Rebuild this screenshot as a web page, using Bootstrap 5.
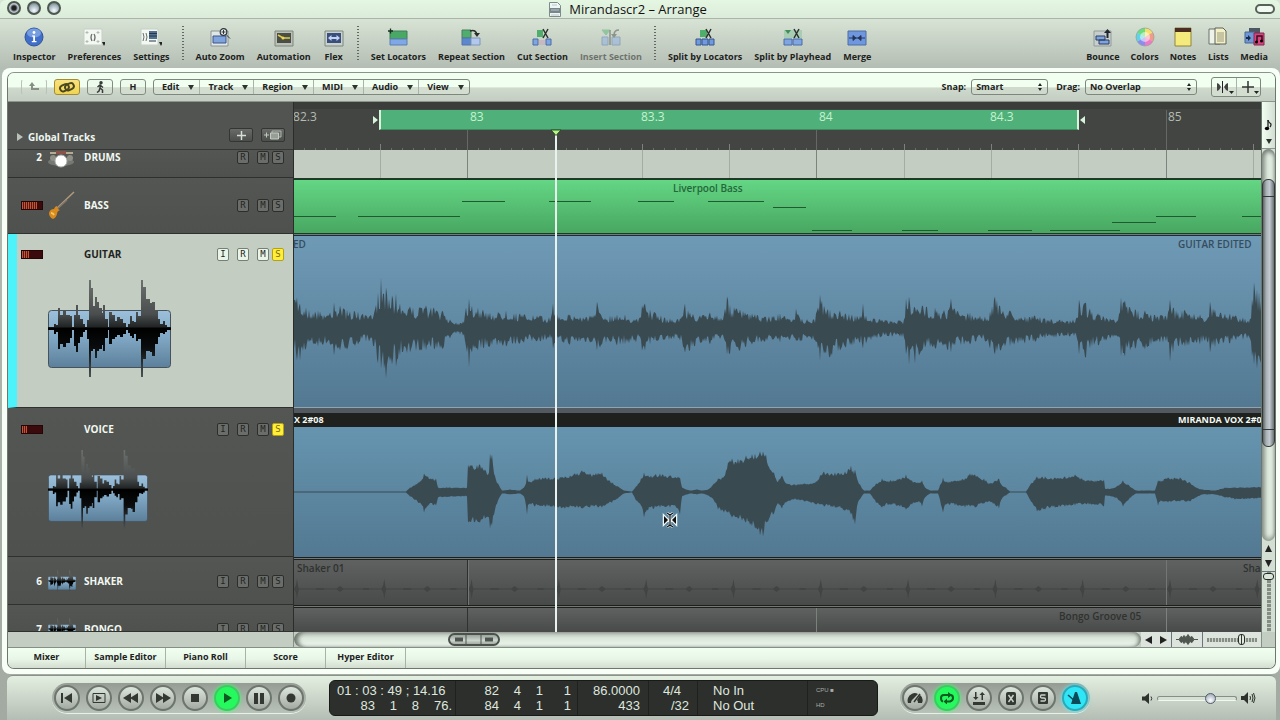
<!DOCTYPE html>
<html lang="en">
<head>
<meta charset="utf-8">
<meta name="viewport" content="width=device-width, initial-scale=1">
<title>Mirandascr2 – Arrange</title>
<link href="https://cdn.jsdelivr.net/npm/bootstrap@5.3.0/dist/css/bootstrap.min.css" rel="stylesheet">
<style>
:root{--ui:"Open Sans","Noto Sans",sans-serif;--head:286px}
body{font-family:var(--ui);font-size:9px;line-height:12px;font-weight:700;color:#1d221d;background:#a4aba3}
button,input,select{font:inherit;color:inherit}
button{background:none;border:0;padding:0}
svg{display:block}
.app{height:100vh;min-height:560px;background:linear-gradient(#d8e4d6 18px,#b4bdb3 68px,#a2aaa1 100%)}
.titlebar{height:19px;padding-right:24px;background:linear-gradient(#e4f7e2,#dcebda);border-bottom:1px solid #aab4a9;border-radius:6px 6px 0 0;font-size:13px;line-height:18px;font-weight:400;color:#111}
.lights{left:7px;top:1px;gap:6px}
.lights i{width:14px;height:14px;border-radius:50%;border:2px solid #4e5650;background:radial-gradient(circle at 50% 75%,#f4fbff,#9fb0b8 60%,#5b666c)}
.lights i:first-child{background:radial-gradient(circle,#222 0 2px,#b9c6cc 4px)}
.lozenge{right:5px;top:4px;width:20px;height:10px;border:2px solid #59605a;border-radius:6px;background:#f0faf0}
.toolbar{height:49px;padding:8px 12px 0 13px;gap:12px}
.tool{display:flex;flex-direction:column;align-items:center;gap:4px;white-space:nowrap}
.tool svg{width:22px;height:20px}
.tool.off{opacity:.5}
.vsep{width:2px;height:35px;margin-top:-1px;background:repeating-linear-gradient(#626962 0 1px,transparent 1px 3px)}
.rightset{gap:11px}
.shell{margin-left:2px;min-height:0;background:#f7fff7;border-radius:8px;padding:4px 4px 5px 5px}
.panel{border:1px solid #6e776e;border-radius:7px;overflow:hidden;background:#e8f8e8;border-top-color:#8b938a;min-height:0}
.menus{height:29px;background:linear-gradient(#f1fff1 0 50%,#cfdacd 53%,#c3cdc2);padding:0 14px 0 13px;border-bottom:1px solid #8c948b}
.leftset{gap:7px}
.pb{height:16px;width:26px;border:1px solid #838c82;border-radius:3px;background:linear-gradient(#edfbed 50%,#d2ddd0 52%);display:flex;align-items:center;justify-content:center}
.pb.hot{background:linear-gradient(#f8e180,#f0d552);border-color:#a48c35}
.pb.dim{border-color:transparent #b9c2b8;background:none}
.mgroup{border:1px solid #7e877d;border-radius:3px;height:16px;background:linear-gradient(#f0fff0 50%,#d3ded1 52%)}
.mgroup button{display:flex;align-items:center;gap:9px;padding:0 5px 0 8px;border-right:1px solid #aab3a9}
.mgroup button:last-child{border-right:0}
.mgroup button::after,.dn{content:"";width:6px;height:0;border:3px solid transparent;border-top:5px solid #2d332d;border-bottom:0}
.pick{position:relative;height:16px;border:1px solid #7e877d;border-radius:3px;background:linear-gradient(#f0fff0 50%,#cfdacd 52%)}
.pick select{appearance:none;background:none;border:0;padding:0 16px 0 4px;height:14px;line-height:14px;width:100%;display:block;outline:0}
.pick svg{position:absolute;right:4px;top:2px}
.picks{gap:5px}.picks label+.pick+label{margin-left:3px}
.snapw{width:77px}.dragw{width:112px}
.tools{height:20px;width:50px;margin-left:14px;border:1px solid #7e877d;border-radius:3px;background:linear-gradient(#f0fff0 50%,#d3ded1 52%)}
.tools button{width:50%}.tools button+button{border-left:1px solid #aab3a9}

.arrange{background:#3a3c39;min-height:0}
.trackcol{min-width:0}
.rulerrow{height:48px;flex:none}
.lefthead{width:var(--head);flex:none;background:#515451;border-right:1px solid #2b2d2a;color:#eef5ee;box-shadow:inset 0 -1px #343634}
.gt{gap:4px;height:10px;font-size:10px}
.hb{width:24px;height:14px;border:1px solid #343634;border-radius:2px;background:linear-gradient(#686b68,#4b4e4b);display:flex;align-items:center;justify-content:center}
.ruler{position:relative;background:#434542;border-top:7px solid #3b3d3a;overflow:hidden;font-size:12px;font-weight:400;line-height:14px;color:#b4bbb3}
.ruler .num,.ruler .numon{position:absolute;top:1px}
.ruler .numon{color:#c6f3cf}
.cycle{position:absolute;top:1px;height:20px;background:#4fb07a;border-left:2px solid #d8f3dc;border-right:2px solid #d8f3dc;border-bottom:1px solid #3d8c5f}
.tk{position:absolute;bottom:0;width:1px;height:2px;background:#6b6e6a}
.tk.b{height:6px;background:#7d807c}.tk.m{height:40px;background:#656864}.tk.m.short{height:20px}
.locL,.locR{position:absolute;top:7px;width:0;height:0;border:4px solid transparent;border-left:5px solid #d8f3dc;border-right:0}
.locR{border:4px solid transparent;border-right:5px solid #d8f3dc;border-left:0}

.track{position:relative;flex:none}
.drums{height:28px}.bass{height:56px}.guitar{height:174px}.voice{height:149px}.shaker{height:48px}.bongo{flex:1 1 0;min-height:0;overflow:hidden}
.th{position:relative;width:var(--head);flex:none;background:linear-gradient(#535652,#4e514e);border-right:1px solid #2b2d2a;border-bottom:1px solid #2f312e;color:#f2f8f2;overflow:hidden}
.line1{display:grid;grid-template-columns:40px 36px 133px 20px 20px 15px 12px;grid-template-rows:14px;align-items:center;height:14px}
.line1 .nm{font-size:10px;line-height:14px}
.line1 .tn{justify-self:end;padding-right:6px;font-size:10px;line-height:14px}
.bass .line1{margin-top:20px}
.guitar .line1{margin-top:13px}
.voice .line1{margin-top:14px}
.shaker .line1,.bongo .line1{margin-top:17px}
.arm{grid-column:5}
.sq{width:12px;height:13px;border:1px solid #2c2e2b;border-radius:2px;background:#6a6d69;color:#232522;font:9px/11px "DejaVu Sans Mono",monospace;text-align:center}
.guitar .sq{background:#eaf5e9;color:#1f231f;border-color:#767f75}
.track .sq.solo{background:#ffee3c;color:#7a6a00;border-color:#b5a213}
.guitar .th{background:#c3cdc1;color:#222;border-left:9px solid #4df3fb}
.guitar .line1{margin-left:-9px}
.led{width:22px;height:9px;margin-left:13px;background:#3b0a0c;border:1px solid #260506}
.led i{display:block;height:100%;background:repeating-linear-gradient(90deg,#c0553a 0 1px,#5c1710 1px 2px)}
.pic{margin-left:-1px}
.bigpic{margin:19px 0 0 31px;width:123px;height:98px}
.midpic{margin:14px 0 0 40px;width:100px;height:80px}
.lane{position:relative;min-width:0;overflow:hidden}
.wave{width:100%;position:absolute;left:0;top:0;height:100%}
.rg{position:relative;overflow:hidden;white-space:nowrap}
.drums .lane{background:#c3cdc1}
.bass .lane{padding:2px 0 1px;background:#1d3a26}
.bass .rg{height:100%;background:linear-gradient(#64d684,#48a761)}
.guitar .lane{border-top:1px solid #6d7a80}
.guitar .rg{height:100%;border-top:1px solid #1e2c34;border-bottom:1px solid #93a3ab;background:linear-gradient(#6f9ab6,#537992)}
.voice .lane{padding-top:5px;background:#525960}
.voice .rg{background:linear-gradient(#6694af,#537992)}
.vt{height:14px;flex:none;background:#1e211e;color:#f4faf4;line-height:13px}
.dimlane{border-top:1px solid #1d1f1d;background:#747874;padding-top:1px}
.dimlane .rg{height:100%;border-top:1px solid #1d1f1d;background:linear-gradient(#5f6260,#474a48)}
.lb{position:absolute;top:2px;font-weight:600;font-size:10px;line-height:12px;color:#364d5e}
.lb.onbass{color:#23683a}.lb.ondim{color:#2f3230}
.nt{position:absolute;height:1px;background:#1f5a30}
.gl{position:absolute;top:0;height:100%;width:1px}
.over{position:absolute;left:var(--head);right:0;top:28px;bottom:0;pointer-events:none}
.ph{position:absolute;top:0;bottom:0;width:2px;margin-left:-1px;background:#e9f2ee}
.ph svg{position:absolute;left:-5px;top:-1px}
.cursor{position:absolute;top:390px;margin:-8px 0 0 -8px}
.side{width:14px;flex:none;background:#d4dfd3;border-left:1px solid #6e776e}
.noteb{height:47px;background:linear-gradient(90deg,#f1fff1,#d3ded2);border-bottom:1px solid #8c948b}
.vtrack{flex:1;background:linear-gradient(90deg,#9fa89e,#dbe6da 45%,#eef9ee);border-radius:7px;box-shadow:inset 0 3px 4px #777f76,inset 0 -3px 4px #9aa399;padding-top:30px}
.vthumb{height:74%;border-radius:6px;border:1px solid #333735;background:linear-gradient(#333735,#333735) 0 16px/100% 1px no-repeat,linear-gradient(#333735,#333735) 0 calc(100% - 16px)/100% 1px no-repeat,linear-gradient(90deg,#5d6464,#a9b1b6 30%,#c3cbd0 60%,#6a7174)}
.sb{height:16px;background:#c3cdc1;border-bottom:1px solid #868f85}
.sbleft{width:var(--head);flex:none;border-right:1px solid #868f85}
.sbend{width:14px;border-left:1px solid #868f85}
.hscroll{background:linear-gradient(#b2bbb1,#dbe6da 40%,#eef8ee);border-radius:9px;box-shadow:inset 5px 0 4px -1px #6f776e,inset -4px 0 4px -2px #6f776e}
.hthumb{position:absolute;top:1px;height:13px;width:52px;border:2px solid #4b514c;border-radius:7px;background:linear-gradient(#9ba39c,#ccd6cd 60%,#a3aba3)}
.tabsrow{height:20px;background:linear-gradient(#f0fff0,#e8f6e7 55%,#d3ddd1)}
.tabsrow a{width:80px;text-align:center;line-height:18px;color:inherit;text-decoration:none;border-right:1px solid #a9b2a8}
.tabsrow a:first-child{width:78px}
.transport{height:45px;margin:1px 4px 0 7px;padding:0 20px 0 45px;border-top:1px solid #8a9289;border-radius:6px 6px 0 0;background:linear-gradient(#e3efe1,#b4bdb3)}
.pill{height:30px;border-radius:15px;background:linear-gradient(#959c94,#b9c2b8);padding:2px;gap:6px;box-shadow:0 1px #e7f1e6}
.rb{width:26px;height:26px;border-radius:50%;border:2px solid #6d756d;background:linear-gradient(#dde6dc,#a2aaa1);display:flex;align-items:center;justify-content:center;color:#333833}
.rb.go{background:#26f95e;border-color:#3fc963;box-shadow:0 0 4px #42ff70;color:#0c5a20}
.rb.cy{background:#2fe6f7;border-color:#2aa9b8;box-shadow:0 0 4px #57eeff;color:#0b4a58}
.lcd{height:36px;margin:0 22px 0 23px;flex:0 1 549px;background:#2d2f2d;border:1px solid #181a18;border-radius:6px;color:#dfe7df;font:13px/15px "Liberation Sans",Arial,sans-serif;overflow:hidden;white-space:nowrap}
.lcd>div{border-right:1px solid #1f211f;padding-top:2px}
.lcd>div:last-child{border:0}
.lr{display:grid;text-align:right}
.c1{width:126px}.c1 .lr{grid-template-columns:45px 22px 22px 33px}
.c1 p{margin:0;padding-left:7px}
.c2{width:122px}.c2 .lr{grid-template-columns:43px 22px 22px 28px}
.c3{width:71px}.c4{width:49px}.c5{width:110px;padding-left:15px}.c6{font-size:6px;color:#a5ada5;padding-left:8px}
input[type=range]{appearance:none;background:none;margin:0;display:block}
.vol{width:80px;height:12px}
.vol::-webkit-slider-runnable-track{height:5px;border:1px solid #868e85;border-radius:3px;background:#d6e0d5;border-bottom-color:#f0f8f0}
.vol::-webkit-slider-thumb{appearance:none;width:11px;height:11px;margin-top:-4px;border-radius:50%;border:1px solid #515c6a;background:radial-gradient(circle at 50% 70%,#fff,#8e9aab)}
.zm{width:50px;height:14px}
.zm::-webkit-slider-runnable-track{height:4px;background:repeating-linear-gradient(90deg,#858d84 0 2px,#c9d3c8 2px 3px)}
.zm::-webkit-slider-thumb{appearance:none;width:7px;height:11px;margin-top:-4px;border-radius:3px;border:1px solid #272b27;background:linear-gradient(90deg,#e0eadf 2px,#333 2px 3px,#e0eadf 3px)}
.vz{writing-mode:vertical-lr;width:13px;height:60px}
.vz::-webkit-slider-runnable-track{width:4px;background:repeating-linear-gradient(#858d84 0 3px,#c9d3c8 3px 4px)}
.vz::-webkit-slider-thumb{appearance:none;width:11px;height:7px;margin-left:-4px;border-radius:3px;border:1px solid #272b27;background:#dbe6da}
</style>
</head>
<body>
<svg width="0" height="0" class="position-absolute" aria-hidden="true">
  <defs>
    <linearGradient id="gb" x1="0" y1="0" x2="0" y2="1"><stop offset="0" stop-color="#9cc0dc"/><stop offset=".5" stop-color="#7ea5c2"/><stop offset="1" stop-color="#5c809b"/></linearGradient>
    <linearGradient id="gk" x1="0" y1="0" x2="0" y2="1"><stop offset="0" stop-color="#6c706e"/><stop offset=".35" stop-color="#4a4e4e"/><stop offset=".48" stop-color="#222525"/><stop offset=".5" stop-color="#000"/><stop offset=".7" stop-color="#0a0c0d"/><stop offset="1" stop-color="#4b5357"/></linearGradient>
    <symbol id="wv" viewBox="0 0 123 98" preserveAspectRatio="none">
      <rect x=".5" y="30.500" width="122" height="57" rx="3" fill="url(#gb)" stroke="#46535b"/>
      <path id="wvpath" fill="url(#gk)" d=""/>
    </symbol>
  </defs>
</svg>
<div class="app d-flex flex-column overflow-hidden">
  <header class="titlebar position-relative d-flex justify-content-center align-items-center gap-2">
    <div class="lights position-absolute d-flex"><i></i><i></i><i></i></div>
    <svg width="12" height="15" viewBox="0 0 12 15"><path d="M.5.500h8l3 3v11H.5z" fill="#eef6f4" stroke="#7e8a8c"/><path d="M1 6h10v5H1z" fill="#78858a"/><path d="M2 8h8M3 3h5M2 13h8" stroke="#b8c6cc"/></svg>
    <span>Mirandascr2 – Arrange</span>
    <div class="lozenge position-absolute"></div>
  </header>

  <div class="toolbar d-flex flex-shrink-0">
    <button class="tool"><svg viewBox="0 0 22 20"><circle cx="11" cy="10" r="9" fill="#3f6fc8" stroke="#31539b"/><ellipse cx="11" cy="6" rx="7" ry="4.500" fill="#9bbcf0" opacity=".6"/><path d="M9 8.500h3V14h1.500v1.200H8.800V14h1.400V9.600H9z" fill="#fff"/><circle cx="11" cy="5.500" r="1.400" fill="#fff"/></svg>Inspector</button>
    <button class="tool"><svg viewBox="0 0 22 20"><path d="M1 2h18v16H1z" fill="#f3f8f2" stroke="#c7cfc6"/><path d="M4 4v3M4 13v3M15 4v3M15 13v3M2.500 5.500h3M2.500 14.500h3M13.500 5.500h3M13.500 14.500h3" stroke="#b3bab3"/><path d="M9 7q-2 3 0 7M11 7q2 3 0 7" fill="none" stroke="#676d68" stroke-width="1.300"/><path d="M19 15h4l-2 4z" fill="#222"/></svg>Preferences</button>
    <button class="tool"><svg viewBox="0 0 22 20"><path d="M1 2h17v16H1z" fill="#f3f8f2" stroke="#c7cfc6"/><path d="M3 6q2 4 0 8M6 6q2 4 0 8" fill="none" stroke="#676d68"/><path d="M9 4h8v8H9z" fill="#53708f"/><path d="M9 6.500h8M9 9h8M9 14h7" stroke="#23364d"/><path d="M19 15h4l-2 4z" fill="#222"/></svg>Settings</button>
    <div class="vsep"></div>
    <button class="tool"><svg viewBox="0 0 22 20"><path d="M2 4h17v15H2z" fill="#dfe7e6" stroke="#8b9492"/><path d="M4 9h13v7H4z" fill="#7fa4dd" stroke="#3b5587"/><circle cx="14.500" cy="5" r="3.300" fill="#e7efef" stroke="#30353a" stroke-width="1.200"/><path d="m17 7.500 4 4M12.500 5h4M14.500 3v4" stroke="#30353a"/></svg>Auto Zoom</button>
    <button class="tool"><svg viewBox="0 0 22 20"><path d="M2 4h18v15H2z" fill="#b9c1b8" stroke="#7e867d"/><path d="M4 6h14v10H4z" fill="#4b4e42"/><path d="M5 8l5 3h7" fill="none" stroke="#dccb55" stroke-width="1.500"/><circle cx="10" cy="11" r="1.500" fill="#ecd94e"/></svg>Automation</button>
    <button class="tool"><svg viewBox="0 0 22 20"><path d="M2 4h18v15H2z" fill="#c9d2cf" stroke="#7e867d"/><path d="M4 6h14v10H4z" fill="#3b4f7c"/><path d="m5 11 3.500-3v2h5V8l3.500 3-3.500 3v-2h-5v2z" fill="#c3d4f5"/></svg>Flex</button>
    <div class="vsep"></div>
    <button class="tool"><svg viewBox="0 0 22 20"><path d="M3 4h17v8H3z" fill="#49a865" stroke="#3f7f54"/><path d="M3 12h17v6H3z" fill="#7fa8e6" stroke="#5f7fb2"/><path d="M1 4h5M3.500 1.500v5" stroke="#16301c" stroke-width="1.300"/></svg>Set Locators</button>
    <button class="tool"><svg viewBox="0 0 22 20"><path d="M2 3h9v8H2z" fill="#4fae6c" stroke="#4b7d5c"/><path d="M2 11h9v7H2z" fill="#5c86ce" stroke="#5574a8"/><path d="M11 11h9v7h-9z" fill="#b2c8ec" stroke="#7f96bc"/><path d="M10 4q6-2 7 4" fill="none" stroke="#25302a" stroke-width="1.500"/><path d="M14 6h6l-3 4z" fill="#25302a"/></svg>Repeat Section</button>
    <button class="tool"><svg viewBox="0 0 22 20"><path d="M6 3h6v7H6z" fill="#4fae6c"/><path d="M2 12h5v6H2zM15 12h5v6h-5z" fill="#7fa5e2" stroke="#4b6da4"/><path d="M8 13h6v5H8z" fill="#c7b9bf"/><path d="m12 2 5 9M17 2l-5 9" stroke="#2b302d" stroke-width="1.500"/></svg>Cut Section</button>
    <button class="tool off" disabled><svg viewBox="0 0 22 20"><path d="M2 3h8l-4 5z" fill="#58b173" stroke="#58b173"/><path d="M2 10h6v8H2zM12 10h8v8h-8z" fill="#8fb0e3" stroke="#5d7caf"/><path d="M10 3v15M14 8q0-5 5-5" fill="none" stroke="#4c524e" stroke-width="1.500"/><path d="M11 7h6l-3 4z" fill="#4c524e"/></svg>Insert Section</button>
    <div class="vsep"></div>
    <button class="tool"><svg viewBox="0 0 22 20"><path d="M6 3h7v7H6z" fill="#4fae6c"/><path d="M2 12h5v6H2zM8 12h6v6H8zM15 12h5v6h-5z" fill="#6f99e0" stroke="#39568b"/><path d="m12 2 5 9M17 2l-5 9" stroke="#2b302d" stroke-width="1.500"/></svg>Split by Locators</button>
    <button class="tool"><svg viewBox="0 0 22 20"><path d="M2 3h18v8H2z" fill="#a9cdb2"/><path d="M2 12h8v6H2zM11 12h9v6h-9z" fill="#7fa5e2" stroke="#4b6da4"/><path d="M3 3h6l-3 4z" fill="#3e8f58"/><path d="m12 2 5 9M17 2l-5 9" stroke="#2b302d" stroke-width="1.500"/></svg>Split by Playhead</button>
    <button class="tool"><svg viewBox="0 0 22 20"><path d="M2 4h18v14H2z" fill="#6f97df" stroke="#4d6ca3"/><path d="M3 11h16M7 8.500v5M15 8.500v5" stroke="#24355a"/><path d="M7 8l3.500 3L7 14zM15 8l-3.500 3 3.500 3z" fill="#24355a"/></svg>Merge</button>
    <div class="rightset d-flex ms-auto">
      <button class="tool"><svg viewBox="0 0 22 20"><path d="M2 4h17v15H2z" fill="#c6cfce" stroke="#929b98"/><path d="M4 9h9v4H4zM7 13h10v4H7z" fill="#7fa4dd" stroke="#2b3d5e"/><path d="M15.500 11V5" stroke="#20262c" stroke-width="2"/><path d="M12 6l3.500-4L19 6z" fill="#20262c"/></svg>Bounce</button>
      <button class="tool"><svg viewBox="0 0 22 20"><path d="M11 10V1a9 9 0 0 1 7.800 4.500z" fill="#f6e06a"/><path d="M11 10l7.800-4.500a9 9 0 0 1 0 9z" fill="#f49a8c"/><path d="M11 10l7.800 4.500A9 9 0 0 1 11 19z" fill="#f177c9"/><path d="M11 10v9a9 9 0 0 1-7.800-4.500z" fill="#8a8cf2"/><path d="M11 10l-7.800 4.500a9 9 0 0 1 0-9z" fill="#5fd3e8"/><path d="M11 10 3.200 5.500A9 9 0 0 1 11 1z" fill="#67df7e"/><circle cx="11" cy="10" r="5" fill="#fff" opacity=".5"/><circle cx="11" cy="10" r="9" fill="none" stroke="#9aa39b" stroke-width=".8"/></svg>Colors</button>
      <button class="tool"><svg viewBox="0 0 22 20"><path d="M3 1h16v18H3z" fill="#f5ea7c" stroke="#90853c"/><path d="M3 1h16v4H3z" fill="#4b2d22"/></svg>Notes</button>
      <button class="tool"><svg viewBox="0 0 22 20"><path d="M2 2h11v15H2z" fill="#eef3ea" stroke="#6a706a"/><path d="M8 1h8l3 3v13H8z" fill="#f4f0c6" stroke="#5b605a"/><path d="M10 6h7M10 8h7M10 10h7M10 12h7M10 14h7" stroke="#98987c"/></svg>Lists</button>
      <button class="tool"><svg viewBox="0 0 22 20"><path d="M6 1h11v9H6z" fill="#4c5762"/><path d="M2 5h10v11H2z" fill="#6e97d8" stroke="#46648f"/><path d="M3 10h2V8l3 3-3 3v-2H3z" fill="#1a2a49"/><path d="M11 6h10v12H11z" fill="#d9437f" stroke="#822a50"/><path d="M14 15V9h5v5" fill="none" stroke="#35101f" stroke-width="1.500"/><circle cx="13.500" cy="15" r="1.500"/><circle cx="18.500" cy="14" r="1.500"/></svg>Media</button>
    </div>
  </div>

  <main class="shell flex-fill d-flex flex-column">
    <div class="panel flex-fill d-flex flex-column">
      <nav class="menus d-flex align-items-center flex-shrink-0">
        <div class="leftset d-flex">
          <button class="pb dim" aria-label="Up"><svg width="12" height="10" viewBox="0 0 12 10"><path d="M4 2v5h7" fill="none" stroke="#878f86" stroke-width="2"/><path d="M1 4l3-4 3 4z" fill="#878f86"/></svg></button>
          <button class="pb hot" aria-label="Link"><svg width="18" height="13" viewBox="0 0 18 13" fill="none" stroke="#4b4620" stroke-width="2"><rect x="2" y="4" width="9" height="6" rx="3" transform="rotate(-25 6 7)"/><rect x="7" y="3" width="9" height="6" rx="3" transform="rotate(-25 11 6)"/></svg></button>
          <button class="pb" aria-label="Catch"><svg width="12" height="12" viewBox="0 0 12 12" fill="none" stroke="#363b36" stroke-width="1.500"><circle cx="7" cy="1.800" r="1" fill="#363b36"/><path d="M6.500 3.500 6 7l2.500 2V12M6 7l-1 3-2 1.500M3.500 6l2.500-2 3 2.500"/></svg></button>
          <button class="pb">H</button>
          <div class="mgroup d-flex"><button>Edit</button><button>Track</button><button>Region</button><button>MIDI</button><button>Audio</button><button>View</button></div>
        </div>
        <div class="picks d-flex align-items-center ms-auto">
          <label for="snap">Snap:</label>
          <div class="pick snapw"><select id="snap"><option>Smart</option></select><svg width="6" height="10" viewBox="0 0 6 10"><path d="M1 4l2-3 2 3zM1 6l2 3 2-3z" fill="#222"/></svg></div>
          <label for="drag">Drag:</label>
          <div class="pick dragw"><select id="drag"><option>No Overlap</option></select><svg width="6" height="10" viewBox="0 0 6 10"><path d="M1 4l2-3 2 3zM1 6l2 3 2-3z" fill="#222"/></svg></div>
        </div>
        <div class="tools d-flex">
          <button aria-label="Left tool"><svg width="24" height="18" viewBox="0 0 24 18"><path d="M10.500 3v12" stroke="#222"/><path d="M5 5v8l2-1 2-3-2-3zM16 5v8l-2-1-2-3 2-3z" fill="#444"/><path d="M17 13h5l-2.500 3z" fill="#222"/></svg></button>
          <button aria-label="Right tool"><svg width="24" height="18" viewBox="0 0 24 18"><path d="M11 3v12M5 9h12" stroke="#333" stroke-width="1.500"/><path d="M17 13h5l-2.500 3z" fill="#222"/></svg></button>
        </div>
      </nav>

      <div class="arrange flex-fill d-flex">
        <div class="trackcol flex-fill d-flex flex-column position-relative">
          <div class="rulerrow d-flex">
            <div class="lefthead d-flex align-items-end pb-2 ps-2">
              <div class="gt d-flex align-items-center"><svg width="8" height="8" viewBox="0 0 8 8"><path d="M1 0l6 4-6 4z" fill="#bac1b9"/></svg><span>Global Tracks</span></div>
              <button class="hb ms-auto" aria-label="Add track"><svg width="9" height="9"><path d="M4.500 0v9M0 4.500h9" stroke="#d6ded5" stroke-width="1.500"/></svg></button>
              <button class="hb mx-2" aria-label="Duplicate track"><svg width="18" height="10" viewBox="0 0 18 10"><path d="M0 5h5M2.500 2.500v5" stroke="#c0c8bf"/><path d="M8 1h9v6H8z" fill="#6b6e6a" stroke="#aeb6ad"/><path d="M6.500 3h8v6h-8z" fill="#979e96" stroke="#c4ccc3"/></svg></button>
            </div>
            <div class="ruler flex-fill" id="ruler"></div>
          </div>

          <div class="track drums d-flex">
            <div class="th"><div class="line1"><span class="tn">2</span><svg class="pic" width="30" height="22" viewBox="0 0 30 22"><ellipse cx="14" cy="16" rx="13" ry="4" fill="#757873"/><circle cx="6" cy="12" r="3" fill="#8e8f87"/><circle cx="23" cy="12" r="3" fill="#8e8f87"/><path d="M3 7h7M18 7h8" stroke="#d7c8a6" stroke-width="1.500"/><path d="M9 5h10v3H9z" fill="#8d5148"/><circle cx="14" cy="15" r="6" fill="#fff" stroke="#aab0aa"/></svg><span class="nm">DRUMS</span><button class="sq arm">R</button><button class="sq">M</button><button class="sq">S</button></div></div>
            <div class="lane flex-fill" id="grid"></div>
          </div>
          <div class="track bass d-flex">
            <div class="th"><div class="line1"><span class="led"><i style="width:75%"></i></span><svg class="pic" width="30" height="30" viewBox="0 0 30 30"><path d="M9 19 27 2" stroke="#b19a7d" stroke-width="1.500"/><path d="M8 21 20 10" stroke="#857769" stroke-width="1.500"/><path d="M2 23q1-4 5-4 1-3 3-3 0 3 3 4-3 1-3 4-1 4-4 5-4-2-4-6z" fill="#d98a1c"/><path d="M4 23q2 0 3 2" stroke="#f7c860" stroke-width="2"/></svg><span class="nm">BASS</span><button class="sq arm">R</button><button class="sq">M</button><button class="sq">S</button></div></div>
            <div class="lane flex-fill"><div class="rg" id="notes"></div></div>
          </div>
          <div class="track guitar d-flex">
            <div class="th"><div class="line1"><span class="led"><i style="width:35%"></i></span><span></span><span class="nm">GUITAR</span><button class="sq">I</button><button class="sq">R</button><button class="sq">M</button><button class="sq solo">S</button></div><svg class="bigpic"><use href="#wv"/></svg></div>
            <div class="lane flex-fill"><div class="rg" id="rgg"><svg class="wave" id="wg" preserveAspectRatio="none" viewBox="294 236 967 171"></svg></div></div>
          </div>
          <div class="track voice d-flex">
            <div class="th"><div class="line1"><span class="led"><i style="width:25%"></i></span><span></span><span class="nm">VOICE</span><button class="sq">I</button><button class="sq">R</button><button class="sq">M</button><button class="sq solo">S</button></div><svg class="midpic"><use href="#wv"/></svg></div>
            <div class="lane flex-fill d-flex flex-column"><div class="vt position-relative" id="vt"><span>X 2#08</span></div><div class="rg flex-fill"><svg class="wave" id="wvx" preserveAspectRatio="none" viewBox="294 427 967 130"></svg></div></div>
          </div>
          <div class="track shaker d-flex">
            <div class="th"><div class="line1"><span class="tn">6</span><svg width="28" height="22"><use href="#wv"/></svg><span class="nm">SHAKER</span><button class="sq">I</button><button class="sq">R</button><button class="sq">M</button><button class="sq">S</button></div></div>
            <div class="lane dimlane flex-fill"><div class="rg" id="rgs"><svg class="wave" id="ws" preserveAspectRatio="none" viewBox="294 560 967 45"></svg></div></div>
          </div>
          <div class="track bongo d-flex">
            <div class="th"><div class="line1"><span class="tn">7</span><svg width="28" height="22"><use href="#wv"/></svg><span class="nm">BONGO</span><button class="sq">I</button><button class="sq">R</button><button class="sq">M</button><button class="sq">S</button></div></div>
            <div class="lane dimlane flex-fill"><div class="rg" id="bg"></div></div>
          </div>
          <div class="over"><div class="ph" style="left:27.100%"><svg width="12" height="7"><path d="M1 1h10L6 6.500z" fill="#b6f58a" stroke="#2c4a22"/></svg></div>
            <svg class="cursor" style="left:38.900%" width="16" height="16" viewBox="0 0 16 16"><path d="M2 4v8l4-4zM14 4v8l-4-4zM8 2v12M5 1l3 2 3-2M5 15l3-2 3 2" fill="#111" stroke="#eef6f6" stroke-width="2.500"/><path d="M2 4v8l4-4zM14 4v8l-4-4z" fill="#111"/><path d="M8 2v12M5 1l3 2 3-2M5 15l3-2 3 2" fill="none" stroke="#111" stroke-width="1.200"/></svg></div>
        </div>
        <div class="side d-flex flex-column">
          <div class="noteb d-flex flex-column align-items-center justify-content-end pb-1 gap-2"><svg width="9" height="12" viewBox="0 0 9 12"><path d="M4 1v8" stroke="#222" stroke-width="1.300"/><ellipse cx="3" cy="9.500" rx="2.200" ry="1.700"/><path d="M4 1q0 2 3 4 0 2-1 3" fill="none" stroke="#222" stroke-width="1.300"/></svg><span class="dn"></span></div>
          <div class="vtrack"><div class="vthumb"></div></div>
          <div class="d-flex flex-column align-items-center gap-2 py-1 border-bottom border-secondary"><svg width="7" height="7"><path d="M0 7l3.500-7L7 7z" fill="#222"/></svg><svg width="7" height="7"><path d="M0 0l3.500 7L7 0z" fill="#222"/></svg></div>
          <input class="vz" type="range" value="2" aria-label="Vertical zoom">
        </div>
      </div>

      <div class="sb d-flex flex-shrink-0">
        <div class="sbleft"></div>
        <div class="hscroll flex-fill position-relative"><div class="hthumb" style="left:18.200%"><svg width="48" height="9"><path d="M5 4.500h8M35 4.500h8" stroke="#4e544f" stroke-width="4"/><path d="M16 0v9M31 0v9" stroke="#4e544f"/></svg></div></div>
        <div class="d-flex align-items-center gap-2 px-1 bg-light bg-opacity-50"><svg width="7" height="8"><path d="M7 0v8L0 4z" fill="#222"/></svg><svg width="7" height="8"><path d="M0 0v8l7-4z" fill="#222"/></svg></div>
        <div class="d-flex align-items-center px-1 bg-light bg-opacity-50 border-start border-end border-secondary"><svg width="22" height="13" viewBox="0 0 22 13"><path d="M0 6.500h3l2-3 2 1 1-2 2 2 2-3 2 3 2-1 2 3h4-4l-2 3-2-1-2 3-2-3-2 2-1-2-2 1-2-3z" fill="#4f5650" stroke="#4f5650"/></svg></div>
        <div class="d-flex align-items-center px-1 bg-light bg-opacity-50"><input class="zm" type="range" value="72" aria-label="Horizontal zoom"></div>
        <div class="sbend"></div>
      </div>
      <nav class="tabsrow d-flex flex-shrink-0"><a href="#">Mixer</a><a href="#">Sample Editor</a><a href="#">Piano Roll</a><a href="#">Score</a><a href="#">Hyper Editor</a></nav>
    </div>
  </main>

  <footer class="transport d-flex align-items-center flex-shrink-0">
    <div class="pill d-flex flex-shrink-0">
      <button class="rb" aria-label="To start"><svg width="14" height="12" fill="currentColor"><path d="M1 1h2v10H1zM12 1v10L4 6z"/></svg></button>
      <button class="rb" aria-label="Play from selection"><svg width="14" height="12" viewBox="0 0 14 12"><path d="M1 1.500h12v9H1z" fill="none" stroke="currentColor"/><path d="M4 3v6l6-3z" fill="currentColor"/></svg></button>
      <button class="rb" aria-label="Rewind"><svg width="16" height="12" fill="currentColor"><path d="M8 1v10L0 6zM15 1v10L7 6z"/></svg></button>
      <button class="rb" aria-label="Forward"><svg width="16" height="12" fill="currentColor"><path d="M1 1v10l8-5zM8 1v10l8-5z"/></svg></button>
      <button class="rb" aria-label="Stop"><svg width="8" height="8" fill="currentColor"><path d="M0 0h8v8H0z"/></svg></button>
      <button class="rb go" aria-label="Play"><svg width="9" height="10" fill="currentColor"><path d="M1 0v10l8-5z"/></svg></button>
      <button class="rb" aria-label="Pause"><svg width="10" height="11" fill="currentColor"><path d="M0 0h4v11H0zM6 0h4v11H6z"/></svg></button>
      <button class="rb" aria-label="Record"><svg width="10" height="10" fill="currentColor"><circle cx="5" cy="5" r="4.500"/></svg></button>
    </div>
    <div class="lcd d-flex">
      <div class="c1 flex-shrink-0"><p>01 : 03 : 49 ; 14.16</p><div class="lr"><span>83</span><span>1</span><span>8</span><span>76.</span></div></div>
      <div class="c2 flex-shrink-0"><div class="lr"><span>82</span><span>4</span><span>1</span><span>1</span></div><div class="lr"><span>84</span><span>4</span><span>1</span><span>1</span></div></div>
      <div class="c3 text-end"><div class="pe-2">86.0000</div><div class="pe-2">433</div></div>
      <div class="c4 text-end"><div class="pe-3">4/4</div><div class="pe-2">/32</div></div>
      <div class="c5">No In<br>No Out</div>
      <div class="c6">CPU ■<br>HD</div>
    </div>
    <div class="pill d-flex flex-shrink-0">
      <button class="rb" aria-label="Meter"><svg width="18" height="16" viewBox="0 0 18 16"><path d="M2 13a8 8 0 0 1 0-5 7 7 0 0 1 10-4L6 10q-1 1-1 3zM14 5q4 3 2 8l-4 0q0-2-1-3z" fill="currentColor"/><path d="M8 12l6-8" stroke="currentColor" stroke-width="1.500"/></svg></button>
      <button class="rb go" aria-label="Cycle"><svg width="14" height="12" viewBox="0 0 14 12" fill="none" stroke="currentColor" stroke-width="2"><path d="M3 9.500Q1 9 1 6t3-3h5M11 3q2 .5 2 3T10 9.500H6"/><path d="M8 0v6l4-3zM7 6.500v6L3.500 9.500z" fill="currentColor" stroke="none"/></svg></button>
      <button class="rb" aria-label="Autopunch"><svg width="16" height="15" viewBox="0 0 16 15" fill="currentColor"><path d="M4 1h1.500v5h2L4.800 9 2 6h2zM10.500 9H12V4h2l-2.800-3L8.500 4h2zM2 11h12v3H2z"/></svg></button>
      <button class="rb" aria-label="Replace"><svg width="10" height="13"><rect width="10" height="13" rx="2" fill="currentColor"/><path d="m2.500 3 5 7M7.500 3l-5 7" stroke="#c9d2c8" stroke-width="1.500"/></svg></button>
      <button class="rb" aria-label="Solo"><svg width="10" height="12"><rect width="10" height="12" rx="1" fill="currentColor"/><path d="M7.500 3h-4q-1 0-1 1.500T4 6h2q1.500 0 1.500 1.500T6.500 9h-4" fill="none" stroke="#c9d2c8" stroke-width="1.300"/></svg></button>
      <button class="rb cy" aria-label="Metronome"><svg width="18" height="15" viewBox="0 0 18 15"><path d="M9 1h2l4 12H5z" fill="currentColor"/><path d="M2 4l9 8" stroke="currentColor" stroke-width="1.500"/></svg></button>
    </div>
    <div class="ms-auto d-flex align-items-center gap-1 flex-shrink-0">
      <svg width="11" height="11" viewBox="0 0 11 11" fill="#2d322d"><path d="M0 3.500h3L7 0v11L3 7.500H0z"/><path d="M9 3.500q1.500 2 0 4" fill="none" stroke="#2d322d"/></svg>
      <input class="vol" type="range" value="70" aria-label="Volume">
      <svg width="15" height="12" viewBox="0 0 15 12" fill="#2d322d"><path d="M0 4h3l4-4v12L3 8H0z"/><path d="M9 4q1 2 0 4M11 2q2 4 0 8M12.500 1q3 5 0 10" fill="none" stroke="#2d322d"/></svg>
    </div>
  </footer>
</div>
<script src="https://cdn.jsdelivr.net/npm/bootstrap@5.3.0/dist/js/bootstrap.bundle.min.js"></script>
<script>
// Timeline coordinates: the visible range runs from 294 to 1261 and is shown as percentages.
const T0 = 294, TW = 967, pc = x => ((x - T0) / TW * 100).toFixed(3) + '%', wd = w => (w / TW * 100).toFixed(3) + '%';
const add = (id, cls, css, text) => { const e = document.createElement('span'); e.className = cls; e.style.cssText = css; if (text) e.textContent = text; document.getElementById(id).append(e); };

// ruler and grid
const beat = 87.3, first = 380;
add('ruler', 'cycle', `left:${pc(379)};width:${wd(700)}`);
add('ruler', 'locL', `left:${pc(373)}`); add('ruler', 'locR', `left:${pc(1080)}`);
for (let i = -7; i < 82; i++) add('ruler', 'tk' + (i % 8 ? '' : ' b'), `left:${pc(first + i * beat / 8)}`);
[467, 816, 1166].forEach(x => add('ruler', 'tk m' + (x < 1078 ? ' short' : ''), `left:${pc(x)}`));
[[293, '82.3'], [470, '83'], [641, '83.3'], [819, '84'], [990, '84.3'], [1168, '85']].forEach(([x, t]) => add('ruler', x > 379 && x < 1078 ? 'numon' : 'num', `left:${pc(x)}`, t));
for (let i = 0; i < 11; i++) if (i !== 2) add('grid', 'gl', `left:${pc(first + i * beat)};background:${i % 4 === 1 ? '#7c857b' : '#a3ada2'}`);
[[467, '#2f3230'], [816, '#7d817e'], [1166, '#7d817e']].forEach(([x, c]) => add('bg', 'gl', `left:${pc(x)};background:${c}`));

// region names
add('notes', 'lb onbass', `left:${pc(673)}`, 'Liverpool Bass');
add('rgg', 'lb', `left:${pc(293)}`, 'ED');
add('rgg', 'lb', `left:${pc(1178)}`, 'GUITAR EDITED');
add('vt', 'position-absolute text-nowrap', `left:${pc(1178)}`, 'MIRANDA VOX 2#08');
add('rgs', 'lb ondim', `left:${pc(297)}`, 'Shaker 01');
add('rgs', 'lb ondim', `left:${pc(1243)}`, 'Shaker 01');
add('bg', 'lb ondim', `left:${pc(1059)}`, 'Bongo Groove 05');

// bass notes: start, end, top
[[294,336,36],[358,460,36],[462,505,21],[549,591,21],[638,674,21],[708,764,21],[773,806,27],[812,852,50],[902,938,50],[988,1032,50],[1050,1120,50],[1112,1156,42],[1156,1196,36],[1242,1261,36]]
  .forEach(([a, b, y]) => add('notes', 'nt', `left:${pc(a)};width:${wd(b - a)};top:${y}px`));

// waveforms: x, upper level, lower level
let seed = 7; const rnd = () => (seed = (seed * 16807) % 2147483647) / 2147483647;
const triples = pts => { const p = []; for (let i = 0; i < pts.length; i += 3) p.push(pts.slice(i, i + 3)); return p; };
function wave(id, mid, pts, rough) {
  const p = triples(pts);
  let up = '', dn = '', k = 0;
  for (let x = p[0][0]; x <= p[p.length - 1][0]; x++) {
    while (k < p.length - 2 && x >= p[k + 1][0]) k++;
    const f = (x - p[k][0]) / (p[k + 1][0] - p[k][0]);
    const lv = j => ((p[k][j] + (p[k + 1][j] - p[k][j]) * f) * (f ? 1 - rough * rnd() : 1) + .5).toFixed(1);
    const a = mid - lv(1), b = mid + +lv(2);
    up += `L${x} ${a}`; dn = `L${x} ${b}` + dn;
  }
  document.getElementById(id).innerHTML = `<path fill="#3a4a51" d="M${p[0][0]} ${mid}${up}${dn}z"/>`;
}
wave('wg', 328, [294,27,20,297,30,32,300,24,32,306,20,20,318,17,18,330,15,16,334,25,27,340,22,22,347,18,21,358,16,16,366,12,13,374,14,18,378,35,35,381,50,40,384,34,40,386,40,50,392,32,36,396,34,38,400,24,27,410,21,24,420,20,22,426,22,22,434,20,21,443,16,20,450,8,10,456,5,5,463,6,7,466,20,18,469,29,39,472,22,24,478,20,22,490,15,18,506,17,18,520,14,15,540,12,13,551,10,10,553,24,20,556,16,16,570,13,16,590,12,14,596,14,14,597,26,22,600,14,19,610,12,13,617,13,17,625,13,16,636,8,14,640,10,8,642,22,22,645,24,22,650,18,16,665,10,11,680,9,12,685,24,24,690,15,22,700,12,14,710,15,16,724,13,10,727,31,26,730,23,25,740,18,22,752,14,16,765,11,13,780,14,14,790,8,11,796,19,12,800,9,13,814,8,11,818,20,20,820,33,32,824,22,25,830,18,29,840,17,22,852,13,17,862,12,15,863,24,20,866,12,15,880,8,9,900,7,8,904,8,9,906,29,26,909,31,36,915,20,35,922,22,22,935,20,20,948,17,22,951,29,24,955,18,17,970,15,16,985,11,13,990,16,20,995,31,26,1000,22,22,1010,17,18,1025,11,15,1035,12,13,1045,9,10,1070,7,8,1077,10,10,1079,28,26,1086,25,29,1090,19,20,1098,14,17,1110,9,10,1118,7,8,1121,30,28,1125,27,28,1130,20,22,1145,17,21,1160,12,14,1168,15,14,1170,28,33,1173,20,24,1185,17,18,1200,13,16,1208,10,14,1210,26,24,1215,18,19,1230,14,15,1250,9,10,1252,28,28,1254,45,36,1257,38,40,1261,36,36], .6);
wave('wvx', 492, [294,0,0,406,0,0,410,4,4,418,9,10,422,12,13,424,18,20,428,15,13,436,13,13,438,4,5,455,4,4,467,4,4,468,27,30,480,27,30,485,22,26,489,19,25,490,38,36,492,37,33,494,18,22,498,8,8,502,1,1,510,2,2,520,1,1,524,4,4,526,8,13,527,17,22,528,10,12,535,13,14,545,14,14,555,14,15,565,15,16,575,18,15,582,21,16,590,18,15,602,19,15,605,15,13,612,9,10,618,5,6,624,1,1,632,0,0,636,5,8,641,13,13,644,19,25,648,16,18,660,18,15,670,16,15,678,15,16,680,14,22,682,4,4,690,1,1,697,2,2,702,1,1,708,2,3,714,8,8,718,13,17,724,15,20,728,29,20,732,33,25,738,33,26,742,31,28,746,36,30,755,38,36,760,40,43,763,40,44,766,37,30,768,26,29,774,19,21,777,10,12,782,16,16,786,8,10,794,7,7,805,8,9,816,10,12,820,16,12,824,20,14,835,19,15,845,20,18,851,26,22,853,21,28,855,22,32,857,13,14,861,5,5,864,1,1,870,1,1,876,8,10,882,13,15,890,11,12,900,13,14,906,17,17,912,11,12,920,9,10,922,11,14,925,4,5,930,1,1,938,1,1,943,14,20,945,10,12,955,11,13,965,13,15,970,18,14,975,17,15,984,13,11,990,8,9,999,13,16,1002,6,6,1006,4,3,1010,0,0,1026,0,0,1031,8,9,1037,15,19,1045,15,17,1055,14,15,1065,15,14,1075,17,13,1082,13,12,1095,11,12,1104,12,14,1105,3,3,1112,3,4,1118,6,7,1123,11,14,1128,7,8,1133,3,3,1136,1,1,1155,1,1,1158,11,13,1160,11,9,1168,14,10,1180,14,9,1190,9,9,1196,4,5,1202,2,2,1215,1,2,1225,4,5,1235,4,7,1261,5,6], .2);

// stepped waveform of the track icon
const ic = triples([0,1,1,6,4,5,8,3,3,10,20,20,12,13,15,15,18,18,18,13,14,22,12,9,24,1,1,26,13,17,28,23,23,30,13,14,32,9,8,35,4,3,37,1,1,39,8,10,41,48,48,43,40,22,45,22,20,47,31,29,49,26,22,51,20,20,54,15,16,55,23,22,57,9,9,60,1,1,61,16,15,64,13,10,67,7,8,69,11,6,72,9,8,75,5,5,78,1,1,80,4,4,82,12,7,84,7,9,86,6,5,88,16,12,90,12,10,93,48,48,95,41,30,98,29,22,102,25,23,104,26,27,107,18,15,110,9,8,112,4,4,115,7,5,117,3,3,119,1,1,123,0,0]);
let iu = 'M0 48', idn = '';
ic.forEach(([x, u, d], i) => { const n = ic[i + 1] ? ic[i + 1][0] : x; iu += `L${x} ${48 - u}L${n} ${48 - u}`; idn = `L${n} ${49 + d}L${x} ${49 + d}` + idn; });
document.getElementById('wvpath').setAttribute('d', iu + idn + 'z');

// shaker hits on every beat with softer ones in between
let hits = 'M294 588.500h967v1H294z';
for (let i = -1; i < 12; i++) { const x = 384.3 + i * beat; hits += `M${x} 579l1 7 1 3-1 4-1 6-1-6-2-4 2-4z`; hits += `M${x + 43} 586l4 3-4 3-4-3zM${x + 19} 588h8v2h-8zM${x + 66} 588h6v2h-6z`; }
document.getElementById('ws').innerHTML = `<path fill="#414442" d="${hits}"/><path d="M467.500 560v45" stroke="#2c2f2d"/><path d="M468.500 560v45M1166.500 560v45" stroke="#737774"/>`;
</script>
</body>
</html>
